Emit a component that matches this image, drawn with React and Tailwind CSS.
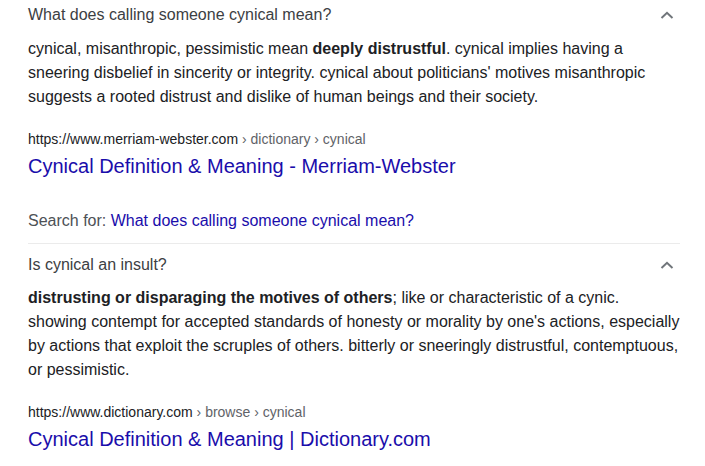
import React from 'react';

const Chevron = () => (
  <svg width="14" height="8" viewBox="0 0 14 8" className="shrink-0">
    <polyline points="1.5,7 7,1.8 12.5,7" fill="none" stroke="#70757a" strokeWidth="2" />
  </svg>
);

const Question = ({ text }) => (
  <div className="flex items-center justify-between pr-[6px]">
    <span className="text-[16px] leading-[24px] text-[#3c4043]">{text}</span>
    <Chevron />
  </div>
);

const Source = ({ domain, path, title }) => (
  <div className="mt-[20px]">
    <div className="text-[14px] leading-[20px] text-[#202124]">
      {domain}
      <span className="text-[#5f6368]">{path}</span>
    </div>
    <div className="mt-[4px] text-[20px] leading-[26px] text-[#1a0dab]">{title}</div>
  </div>
);

export default function App() {
  return (
    <div className="min-h-[466px] bg-white pl-[28px] font-['Liberation_Sans',Arial,sans-serif]">
      <div className="w-[652px]">
        <section className="pt-[3px]">
          <Question text="What does calling someone cynical mean?" />
          <p className="mt-[10px] text-[16px] leading-[24px] text-[#202124]">
            cynical, misanthropic, pessimistic mean <b>deeply distrustful</b>. cynical implies having a
            sneering disbelief in sincerity or integrity. cynical about politicians' motives misanthropic
            suggests a rooted distrust and dislike of human beings and their society.
          </p>
          <Source
            domain="https://www.merriam-webster.com"
            path=" › dictionary › cynical"
            title="Cynical Definition & Meaning - Merriam-Webster"
          />
          <div className="mt-[30px] pb-[10px] text-[16px] leading-[24px] text-[#4d5156]">
            Search for: <span className="text-[#1a0dab]">What does calling someone cynical mean?</span>
          </div>
        </section>

        <section className="border-t border-[#ebebeb] pt-[9px]">
          <Question text="Is cynical an insult?" />
          <p className="mt-[9px] text-[16px] leading-[24px] text-[#202124]">
            <b>distrusting or disparaging the motives of others</b>; like or characteristic of a cynic.
            showing contempt for accepted standards of honesty or morality by one's actions, especially
            by actions that exploit the scruples of others. bitterly or sneeringly distrustful, contemptuous,
            or pessimistic.
          </p>
          <Source
            domain="https://www.dictionary.com"
            path=" › browse › cynical"
            title="Cynical Definition & Meaning | Dictionary.com"
          />
        </section>
      </div>
    </div>
  );
}
